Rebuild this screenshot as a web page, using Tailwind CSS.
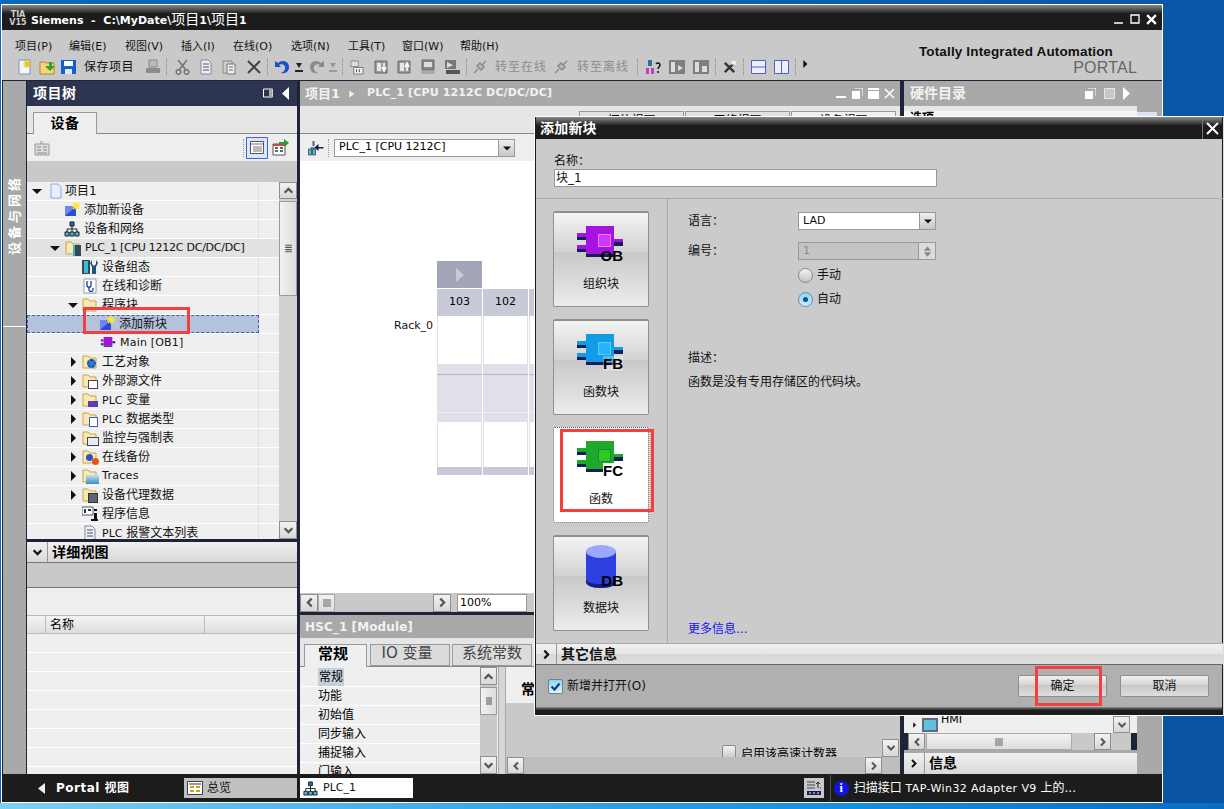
<!DOCTYPE html>
<html lang="zh-CN">
<head>
<meta charset="UTF-8" />
<title>Siemens - C:\MyDate\项目1\项目1</title>
<script src="https://cdn.jsdelivr.net/npm/@tailwindcss/browser@4"></script>
</head>
<body class="relative w-[1224px] h-[809px] overflow-hidden bg-[linear-gradient(100deg,#0a66bc,#0b5fb0_60%,#0a52a2)] font-['DejaVu_Sans','Noto_Sans_CJK_SC',sans-serif] text-[11px] text-black">

<!-- shared icons -->
<svg class="hidden" xmlns="http://www.w3.org/2000/svg">
  <symbol id="folder" viewBox="0 0 16 16"><path d="M1 14V2h5l2 2h6v10z" fill="#fbeab0" stroke="#c9a24a"/></symbol>
  <symbol id="newblock" viewBox="0 0 16 16"><path d="M1 4h11v10H1z" fill="#2f49d8"/><path d="M1 4h11L1 14z" fill="#6f86f0"/><path d="M12 0v8M8 4h8M9 1l6 6M15 1L9 7" stroke="#ffe92e" stroke-width="1.3"/></symbol>
  <symbol id="net" viewBox="0 0 16 16"><path d="M6 1h4v4H6z" fill="#2f6f9f" stroke="#123"/><path d="M8 5v3M3 11V8h10v3M8 8v3" stroke="#222" fill="none"/><path d="M1 11h4v4H1zM6 11h4v4H6zM11 11h4v4h-4z" fill="#57b5c9" stroke="#123"/></symbol>
  <symbol id="chev-up" viewBox="0 0 10 10"><path d="M1.500 7L5 3.500 8.500 7" fill="none" stroke="#555" stroke-width="2"/></symbol>
  <symbol id="chev-down" viewBox="0 0 10 10"><path d="M1.500 3L5 6.500 8.500 3" fill="none" stroke="#555" stroke-width="2"/></symbol>
  <symbol id="chev-left" viewBox="0 0 10 10"><path d="M7 1.500L3.500 5 7 8.500" fill="none" stroke="#555" stroke-width="2"/></symbol>
  <symbol id="chev-right" viewBox="0 0 10 10"><path d="M3 1.500L6.500 5 3 8.500" fill="none" stroke="#555" stroke-width="2"/></symbol>
  <symbol id="grip-v" viewBox="0 0 10 10"><path d="M2 2h6M2 4h6M2 6h6M2 8h6" stroke="#555"/></symbol>
  <symbol id="grip-h" viewBox="0 0 10 10"><path d="M2 1v8M4 1v8M6 1v8M8 1v8" stroke="#666"/></symbol>
  <symbol id="tri-d" viewBox="0 0 10 10"><path d="M0 3h10L5 8z" fill="#111"/></symbol>
  <symbol id="tri-r" viewBox="0 0 10 10"><path d="M3 0l5 5-5 5z" fill="#111"/></symbol>
  <symbol id="doc" viewBox="0 0 16 16"><path d="M3 1h7l3 3v11H3z" fill="#eef" stroke="#889"/><path d="M5 5h6M5 8h6M5 11h6" stroke="#555"/></symbol>
  <symbol id="gray-box" viewBox="0 0 16 16"><path d="M2 2h12v12H2z" fill="#9a9a9a" stroke="#666"/><path d="M4 4h4v8H4z" fill="#e6e6e6"/></symbol>
  <symbol id="plug" viewBox="0 0 16 16"><path d="M2 14l4-4M10 6l4-4M5 7l4 4 3-3-4-4z" fill="#bbb" stroke="#8a8a8a" stroke-width="1.500"/></symbol>
  <symbol id="blockports" viewBox="0 0 46 38"><path d="M0 7h9v4H0zM0 19h9v4H0zM37 13h9v4h-9z" fill="currentColor"/><path d="M0 11h9v3H0zM0 23h9v3H0zM37 16h9v4h-9z" fill="#12205a"/><path d="M9 0h28v28H9z" fill="currentColor"/><path d="M9 28h28v3H9z" fill="#12205a"/></symbol>
</svg>

<!-- main window -->
<div class="absolute left-[1px] top-[4px] w-[1162px] h-[799px] bg-[#1c1c1c] border border-white flex flex-col">
  <!-- title bar -->
  <div class="h-[25px] flex items-center bg-[linear-gradient(#8a8a8a,#1c1c1c_35%,#1c1c1c)] text-white pt-[3px]">
    <span class="ml-[7px] w-[18px] text-[8px] leading-[8px] font-bold text-[#cfcfcf] text-center">TIA<br />V15</span>
    <span class="ml-[4px] text-[11px] font-bold whitespace-pre">Siemens  -  C:\MyDate\<span class="text-[14px] font-normal">项目</span>1\<span class="text-[14px] font-normal">项目</span>1</span>
    <span class="ml-auto mr-[5px] flex items-center gap-[6px]">
      <svg class="w-[10px] h-[10px]" viewBox="0 0 10 10"><path d="M0 9h9" stroke="#fff" stroke-width="1.500"/></svg>
      <svg class="w-[10px] h-[10px]" viewBox="0 0 10 10"><path d="M1 1h8v8H1z" fill="none" stroke="#fff" stroke-width="1.300"/></svg>
      <svg class="w-[11px] h-[11px]" viewBox="0 0 10 10"><path d="M1 1l8 8M9 1L1 9" stroke="#fff" stroke-width="2"/></svg>
    </span>
  </div>

  <!-- menu + toolbar -->
  <div class="relative h-[51px] bg-[#c9c9c9] border-b border-[#1e2438]">
    <div class="flex items-center h-[28px] pt-[6px] pl-[13px] text-[11px] text-[#111]">
      <span class="w-[54px]">项目(P)</span><span class="w-[56px]">编辑(E)</span><span class="w-[56px]">视图(V)</span><span class="w-[52px]">插入(I)</span><span class="w-[58px]">在线(O)</span><span class="w-[57px]">选项(N)</span><span class="w-[54px]">工具(T)</span><span class="w-[58px]">窗口(W)</span><span>帮助(H)</span>
    </div>
    <div class="flex items-center h-[18px] pl-[15px]">
      <svg class="w-[16px] h-[16px]" viewBox="0 0 16 16"><path d="M2 1h11v14H2z" fill="#f4f6ff" stroke="#7d8fc4"/><path d="M10 1v8M6 5h8M7 2l6 6M13 2L7 8" stroke="#e8c800" stroke-width="1.200"/></svg>
      <svg class="w-[17px] h-[16px] ml-[6px]" viewBox="0 0 17 16"><path d="M1 15V3h5l1 1h8v11z" fill="#f7d775" stroke="#a8863a"/><path d="M6 7h4V3h3v4h3l-5 5z" fill="#35a02f"/></svg>
      <svg class="w-[15px] h-[16px] ml-[5px]" viewBox="0 0 15 16"><path d="M0 1h15v14H0z" fill="#1160d0"/><path d="M3 2h9v5H3z" fill="#fff"/><path d="M4 10h7v5H4z" fill="#dfe9ff"/></svg>
      <span class="ml-[8px] w-[53px] text-[12px] tracking-[0.5px] text-[#111]">保存项目</span>
      <svg class="w-[16px] h-[16px] ml-[8px]" viewBox="0 0 16 16"><path d="M4 1h8v7H4z" fill="#bbb" stroke="#888"/><path d="M1 9h14v5H1z" fill="#8c8c8c"/></svg>
      <span class="w-px h-[16px] ml-[5px] border-l border-dotted border-[#888]"></span>
      <svg class="w-[15px] h-[16px] ml-[8px]" viewBox="0 0 15 16"><path d="M3 1l8 10M12 1L4 11" stroke="#777" stroke-width="1.600"/><circle cx="3.500" cy="13" r="2.300" fill="none" stroke="#777" stroke-width="1.500"/><circle cx="11.500" cy="13" r="2.300" fill="none" stroke="#777" stroke-width="1.500"/></svg>
      <svg class="w-[16px] h-[16px] ml-[8px]" viewBox="0 0 16 16"><use href="#doc" /></svg>
      <svg class="w-[16px] h-[16px] ml-[7px]" viewBox="0 0 16 16"><path d="M2 2h9v12H2z" fill="#ccc" stroke="#888"/><path d="M6 5h8v10H6z" fill="#eee" stroke="#777"/><path d="M8 8h4M8 11h4" stroke="#666"/></svg>
      <svg class="w-[14px] h-[14px] ml-[10px]" viewBox="0 0 14 14"><path d="M1 1l12 12M13 1L1 13" stroke="#444" stroke-width="2"/></svg>
      <span class="w-px h-[16px] ml-[6px] border-l border-dotted border-[#888]"></span>
      <svg class="w-[16px] h-[16px] ml-[6px]" viewBox="0 0 16 16"><path d="M1 2v6h6L5 6c3-2 7 0 6 4-.5 2-2 3-4 4 5 1 8-2 8-6 0-6-7-8-11-4z" fill="#1a50c8"/></svg>
      <svg class="w-[8px] h-[10px] ml-[5px]" viewBox="0 0 8 10"><path d="M1 1h6L4 6zM0 8h8v2H0z" fill="#222"/></svg>
      <svg class="w-[16px] h-[16px] ml-[6px]" viewBox="0 0 16 16"><path d="M15 2v6H9l2-2C8 4 4 6 5 10c.5 2 2 3 4 4-5 1-8-2-8-6 0-6 7-8 11-4z" fill="#8c8c8c"/></svg>
      <svg class="w-[8px] h-[10px] ml-[4px]" viewBox="0 0 8 10"><path d="M1 1h6L4 6zM0 8h8v2H0z" fill="#999"/></svg>
      <span class="w-px h-[16px] ml-[5px] border-l border-dotted border-[#888]"></span>
      <svg class="w-[15px] h-[15px] ml-[6px]" viewBox="0 0 16 16"><path d="M2 1h8v6H2z" fill="#ddd" stroke="#888"/><path d="M5 8h10v7H5z" fill="#eee" stroke="#777"/><path d="M8 10v3M11 10v3" stroke="#444"/></svg>
      <svg class="w-[16px] h-[16px] ml-[9px]" viewBox="0 0 16 16"><use href="#gray-box" /><path d="M11 4v7M9 8l2 4 2-4" stroke="#fff" fill="none" stroke-width="1.500"/></svg>
      <svg class="w-[16px] h-[16px] ml-[7px]" viewBox="0 0 16 16"><use href="#gray-box" /><path d="M11 12V5M9 8l2-4 2 4" stroke="#fff" fill="none" stroke-width="1.500"/></svg>
      <svg class="w-[16px] h-[16px] ml-[8px]" viewBox="0 0 16 16"><path d="M2 1h12v10H2z" fill="#888" stroke="#666"/><path d="M4 3h8v5H4z" fill="#ddd"/><path d="M1 12h14v3H1z" fill="#aaa"/></svg>
      <svg class="w-[16px] h-[16px] ml-[8px]" viewBox="0 0 16 16"><path d="M1 1h11v9H1z" fill="#777"/><path d="M3 3l6 3-6 3z" fill="#ddd"/><path d="M2 11h14v4H2z" fill="#555"/></svg>
      <span class="w-px h-[16px] ml-[6px] border-l border-dotted border-[#888]"></span>
      <svg class="w-[16px] h-[16px] ml-[5px]" viewBox="0 0 16 16"><use href="#plug" /></svg>
      <span class="ml-[7px] w-[52px] text-[12px] text-[#8d8d8d] tracking-[1px] whitespace-nowrap">转至在线</span>
      <svg class="w-[16px] h-[16px] ml-[6px]" viewBox="0 0 16 16"><use href="#plug" /></svg>
      <span class="ml-[8px] w-[53px] text-[12px] text-[#8d8d8d] tracking-[1px] whitespace-nowrap">转至离线</span>
      <span class="w-px h-[16px] ml-[7px] border-l border-dotted border-[#888]"></span>
      <svg class="w-[16px] h-[16px] ml-[7px]" viewBox="0 0 16 16"><path d="M3 1h4v6H3z" fill="#2f6f9f"/><path d="M1 9h3v6H1zM6 9h3v6H6z" fill="#c040c0"/><path d="M11 5c1-2 4-1 4 1s-2 2-2 4M13 12v2" fill="none" stroke="#111" stroke-width="1.500"/></svg>
      <svg class="w-[16px] h-[16px] ml-[8px]" viewBox="0 0 16 16"><path d="M0 1h16v14H0z" fill="#7f7f7f"/><path d="M2 3h4v10H2z" fill="#ddd"/><path d="M9 6l5 3-5 3z" fill="#ddd"/></svg>
      <svg class="w-[16px] h-[16px] ml-[8px]" viewBox="0 0 16 16"><path d="M0 1h16v14H0z" fill="#7f7f7f"/><path d="M2 3h4v10H2z" fill="#ddd"/><path d="M9 7h5v6H9z" fill="#ddd"/></svg>
      <span class="w-px h-[16px] ml-[6px] border-l border-dotted border-[#888]"></span>
      <svg class="w-[15px] h-[15px] ml-[6px]" viewBox="0 0 16 16"><path d="M3 3l10 10M13 3L3 13" stroke="#333" stroke-width="2.500"/><path d="M10 1h5v4h-5z" fill="#eee"/></svg>
      <span class="w-px h-[16px] ml-[6px] border-l border-dotted border-[#888]"></span>
      <svg class="w-[15px] h-[16px] ml-[7px]" viewBox="0 0 15 16"><path d="M.5 1.500h14v13H.5z" fill="#eef" stroke="#4a62c0"/><path d="M0 8h15" stroke="#4a62c0"/></svg>
      <svg class="w-[15px] h-[16px] ml-[8px]" viewBox="0 0 15 16"><path d="M.5 1.500h14v13H.5z" fill="#eef" stroke="#4a62c0"/><path d="M7.500 1v14" stroke="#4a62c0"/></svg>
      <span class="w-px h-[16px] ml-[6px] border-l border-dotted border-[#888]"></span>
      <svg class="w-[8px] h-[8px] ml-[5px] -mt-[6px]" viewBox="0 0 10 10"><use href="#tri-r" /></svg>
    </div>
    <div class="absolute right-[25px] top-[15px] text-right leading-none">
      <div class="mr-[24px] font-['Liberation_Sans',sans-serif] text-[13.500px] font-bold tracking-[0.15px] text-[#111]">Totally Integrated Automation</div>
      <div class="font-['Liberation_Sans',sans-serif] text-[16px] text-[#666] tracking-[0.2px] mt-[1px]">PORTAL</div>
    </div>
  </div>

  <!-- work area -->
  <div class="flex-1 flex min-h-0 bg-[#1e2438]">
    <!-- left strip -->
    <div class="relative w-[23px] ml-px bg-[#a9a9a9] flex justify-center">
      <div class="mt-[94px] [writing-mode:vertical-rl] [text-orientation:sideways] rotate-180 text-white font-bold text-[13px] tracking-[3px] h-[80px] whitespace-nowrap">设备与网络</div>
      <div class="absolute left-0 right-0 top-[245px] h-px bg-white"></div>
    </div>

    <!-- project tree + details -->
    <div class="w-[270px] ml-px flex flex-col">
      <div class="h-[25px] shrink-0 bg-[#2c3450] text-white flex items-center pl-[6px] pr-[5px] border-b border-[#2c3450]">
        <span class="text-[14px] font-bold tracking-[0.5px]">项目树</span>
        <svg class="ml-auto w-[10px] h-[10px]" viewBox="0 0 10 10"><path d="M.5 1h9v8h-9z" fill="#2c3450" stroke="#fff"/><path d="M6 1h3.500v8H6z" fill="#aaa"/></svg>
        <svg class="ml-[9px] mr-[2px] w-[8px] h-[13px]" viewBox="0 0 8 13"><path d="M7 0v13L0 6.500z" fill="#fff"/></svg>
      </div>
      <div class="h-[28px] shrink-0 bg-[#e6e6e6] border-b border-[#888] flex items-end pl-[6px]">
        <div class="w-[64px] h-[22px] -mb-px bg-[#efefef] border border-b-0 border-[#999] text-center text-[14px] font-bold leading-[21px] tracking-[0.5px]">设备</div>
      </div>
      <div class="h-[27px] shrink-0 bg-[#eeeeee] flex items-center pl-[7px]">
        <svg class="w-[16px] h-[16px]" viewBox="0 0 16 16"><path d="M1 4h14v11H1z" fill="#ddd" stroke="#999"/><path d="M3 7h4M9 7h4M3 10h4M9 10h4M3 13h10" stroke="#888"/><path d="M6 1l3 3M9 1L6 4" stroke="#999"/></svg>
        <span class="ml-auto w-px h-[18px] border-l border-dotted border-[#999]"></span>
        <span class="ml-[2px] w-[22px] h-[22px] border border-[#3a68d0] bg-[#dde6f6] flex items-center justify-center">
          <svg class="w-[14px] h-[13px]" viewBox="0 0 14 13"><path d="M.5.500h13v12H.5z" fill="#fff" stroke="#555"/><path d="M1 3h12M3 6h9M3 8h9M3 10h9" stroke="#777"/></svg>
        </span>
        <svg class="ml-[4px] mr-[8px] w-[17px] h-[17px]" viewBox="0 0 17 17"><path d="M1 5h12v11H1z" fill="#fff" stroke="#555"/><path d="M1 6h12" stroke="#c44" stroke-width="2"/><path d="M3 9h3M8 9h3M3 12h3M8 12h3" stroke="#333" stroke-width="1.500"/><path d="M7 3h5V0l5 4-5 4V5H7z" fill="#2d9a36"/></svg>
      </div>
      <div class="h-[21px] shrink-0 bg-[#c9c9c9]"></div>

      <!-- tree -->
      <div class="h-[357px] shrink-0 flex bg-[#efefef] text-[12px] text-[#111] overflow-hidden">
        <div class="w-[252px] flex flex-col">
          <div class="h-[19px] shrink-0 flex border-b border-white"><div class="w-[232px] flex items-center pl-[5px] border-r border-[#ddd]"><svg class="w-[10px] h-[10px]"><use href="#tri-d" /></svg><svg class="ml-[6px] w-[16px] h-[16px]" viewBox="0 0 16 16"><path d="M3 1h7l3 3v11H3z" fill="#e6eeff" stroke="#8fa8d8"/></svg><span class="ml-[1px]">项目1</span></div></div>
          <div class="h-[19px] shrink-0 flex border-b border-white"><div class="w-[232px] flex items-center pl-[37px] border-r border-[#ddd]"><svg class="w-[16px] h-[16px]"><use href="#newblock" /></svg><span class="ml-[4px]">添加新设备</span></div></div>
          <div class="h-[19px] shrink-0 flex border-b border-white"><div class="w-[232px] flex items-center pl-[37px] border-r border-[#ddd]"><svg class="w-[16px] h-[16px]"><use href="#net" /></svg><span class="ml-[4px]">设备和网络</span></div></div>
          <div class="h-[19px] shrink-0 flex border-b border-white bg-[#e2e2e2]"><div class="w-[232px] flex items-center pl-[23px] border-r border-[#ddd] whitespace-nowrap"><svg class="w-[10px] h-[10px]"><use href="#tri-d" /></svg><span class="ml-[5px] relative w-[16px] h-[16px]"><svg class="w-[16px] h-[16px]"><use href="#folder" /></svg><span class="absolute right-0 bottom-0 w-[8px] h-[11px] bg-[#34495e] border-l-2 border-[#39b7c8]"></span></span><span class="ml-[4px] text-[11px] tracking-[-0.25px]">PLC_1 [CPU 1212C DC/DC/DC]</span></div></div>
          <div class="h-[19px] shrink-0 flex border-b border-white"><div class="w-[232px] flex items-center pl-[55px] border-r border-[#ddd]"><svg class="w-[16px] h-[16px]" viewBox="0 0 16 16"><path d="M0 1h8v14H0z" fill="#445"/><path d="M2 2h4v12H2z" fill="#2fc4d8"/><path d="M10 1v4l2 2 2-2V1l2 3-2 4v7h-4V8L8 4z" fill="#23527c"/></svg><span class="ml-[4px]">设备组态</span></div></div>
          <div class="h-[19px] shrink-0 flex border-b border-white"><div class="w-[232px] flex items-center pl-[55px] border-r border-[#ddd]"><svg class="w-[16px] h-[16px]" viewBox="0 0 16 16"><path d="M2 1h12v14H2z" fill="#fff" stroke="#99a"/><path d="M5 3v4c0 3 4 3 4 0V3M7 9v3c0 2 4 2 4 0V10" fill="none" stroke="#1f3a93" stroke-width="1.300"/></svg><span class="ml-[4px]">在线和诊断</span></div></div>
          <div class="h-[19px] shrink-0 flex border-b border-white"><div class="w-[232px] flex items-center pl-[41px] border-r border-[#ddd]"><svg class="w-[10px] h-[10px]"><use href="#tri-d" /></svg><span class="ml-[4px] relative w-[16px] h-[16px]"><svg class="w-[16px] h-[16px]"><use href="#folder" /></svg><span class="absolute left-[3px] bottom-[3px] w-[9px] h-[3px] bg-[#556]"></span></span><span class="ml-[4px]">程序块</span></div></div>
          <div class="h-[19px] shrink-0 flex border-b border-white"><div class="w-[232px] flex items-center pl-[71px] bg-[#b4c2dc] border border-dashed border-[#3a5fc0]"><svg class="w-[16px] h-[16px]"><use href="#newblock" /></svg><span class="ml-[4px]">添加新块</span></div></div>
          <div class="h-[19px] shrink-0 flex border-b border-white"><div class="w-[232px] flex items-center pl-[73px] border-r border-[#ddd]"><svg class="w-[16px] h-[12px] text-[#a414d8]" viewBox="0 0 46 34" preserveAspectRatio="none"><use href="#blockports" /></svg><span class="ml-[4px] text-[11px] tracking-[0.2px]">Main [OB1]</span></div></div>
          <div class="h-[19px] shrink-0 flex border-b border-white"><div class="w-[232px] flex items-center pl-[41px] border-r border-[#ddd]"><svg class="w-[10px] h-[10px]"><use href="#tri-r" /></svg><span class="ml-[4px] relative w-[16px] h-[16px]"><svg class="w-[16px] h-[16px]"><use href="#folder" /></svg><span class="absolute left-[5px] top-[5px] w-[9px] h-[9px] rounded-full bg-[#2b78d8] border-2 border-dotted border-[#154a9a]"></span></span><span class="ml-[4px]">工艺对象</span></div></div>
          <div class="h-[19px] shrink-0 flex border-b border-white"><div class="w-[232px] flex items-center pl-[41px] border-r border-[#ddd]"><svg class="w-[10px] h-[10px]"><use href="#tri-r" /></svg><span class="ml-[4px] relative w-[16px] h-[16px]"><svg class="w-[16px] h-[16px]"><use href="#folder" /></svg><span class="absolute right-0 bottom-0 w-[10px] h-[9px] bg-white border border-[#445]"></span></span><span class="ml-[4px]">外部源文件</span></div></div>
          <div class="h-[19px] shrink-0 flex border-b border-white"><div class="w-[232px] flex items-center pl-[41px] border-r border-[#ddd]"><svg class="w-[10px] h-[10px]"><use href="#tri-r" /></svg><span class="ml-[4px] relative w-[16px] h-[16px]"><svg class="w-[16px] h-[16px]"><use href="#folder" /></svg><span class="absolute right-0 bottom-[1px] w-[10px] h-[6px] bg-[#5a3fb0]"></span></span><span class="ml-[4px] whitespace-nowrap"><span class="text-[11px]">PLC</span> 变量</span></div></div>
          <div class="h-[19px] shrink-0 flex border-b border-white"><div class="w-[232px] flex items-center pl-[41px] border-r border-[#ddd]"><svg class="w-[10px] h-[10px]"><use href="#tri-r" /></svg><span class="ml-[4px] relative w-[16px] h-[16px]"><svg class="w-[16px] h-[16px]"><use href="#folder" /></svg><span class="absolute right-0 bottom-0 w-[9px] h-[10px] bg-white border border-[#3a5fc0]"></span></span><span class="ml-[4px] whitespace-nowrap"><span class="text-[11px]">PLC</span> 数据类型</span></div></div>
          <div class="h-[19px] shrink-0 flex border-b border-white"><div class="w-[232px] flex items-center pl-[41px] border-r border-[#ddd]"><svg class="w-[10px] h-[10px]"><use href="#tri-r" /></svg><span class="ml-[4px] relative w-[16px] h-[16px]"><svg class="w-[16px] h-[16px]"><use href="#folder" /></svg><span class="absolute right-[-1px] bottom-0 w-[12px] h-[9px] bg-[#e8ecf6] border border-[#445]"></span></span><span class="ml-[4px]">监控与强制表</span></div></div>
          <div class="h-[19px] shrink-0 flex border-b border-white"><div class="w-[232px] flex items-center pl-[41px] border-r border-[#ddd]"><svg class="w-[10px] h-[10px]"><use href="#tri-r" /></svg><span class="ml-[4px] relative w-[16px] h-[16px]"><svg class="w-[16px] h-[16px]"><use href="#folder" /></svg><span class="absolute left-[4px] bottom-[4px] w-[7px] h-[7px] rounded-full bg-[#2b52c8]"></span><span class="absolute right-[-1px] bottom-0 w-[7px] h-[7px] rounded-full bg-[#e8541c]"></span></span><span class="ml-[4px]">在线备份</span></div></div>
          <div class="h-[19px] shrink-0 flex border-b border-white"><div class="w-[232px] flex items-center pl-[41px] border-r border-[#ddd]"><svg class="w-[10px] h-[10px]"><use href="#tri-r" /></svg><span class="ml-[4px] relative w-[16px] h-[16px]"><svg class="w-[16px] h-[16px]"><use href="#folder" /></svg><span class="absolute right-[-1px] bottom-0 w-[13px] h-[9px] bg-[linear-gradient(#bfe0f2,#3b8dc0)]"></span></span><span class="ml-[4px] text-[11px] tracking-[0.3px]">Traces</span></div></div>
          <div class="h-[19px] shrink-0 flex border-b border-white"><div class="w-[232px] flex items-center pl-[41px] border-r border-[#ddd]"><svg class="w-[10px] h-[10px]"><use href="#tri-r" /></svg><span class="ml-[4px] relative w-[16px] h-[16px]"><svg class="w-[16px] h-[16px]"><use href="#folder" /></svg><span class="absolute right-0 bottom-0 w-[10px] h-[10px] bg-[#5b6470] border border-[#333]"></span></span><span class="ml-[4px]">设备代理数据</span></div></div>
          <div class="h-[19px] shrink-0 flex border-b border-white"><div class="w-[232px] flex items-center pl-[55px] border-r border-[#ddd]"><svg class="w-[16px] h-[16px]" viewBox="0 0 16 16"><path d="M0 1h11v8H0z" fill="#fff" stroke="#556"/><path d="M2 3h2v4H2zM6 3h3v2H6z" fill="#334"/><path d="M12 3h3v2h-3zM12 7h3v8h-3zM9 13h7v2H9z" fill="#111"/></svg><span class="ml-[4px]">程序信息</span></div></div>
          <div class="h-[19px] shrink-0 flex border-b border-white"><div class="w-[232px] flex items-center pl-[55px] border-r border-[#ddd] whitespace-nowrap"><svg class="w-[16px] h-[16px]"><use href="#doc" /></svg><span class="ml-[4px]"><span class="text-[11px]">PLC</span> 报警文本列表</span></div></div>
        </div>
        <!-- tree scrollbar -->
        <div class="w-[18px] bg-[#d0d0d0] flex flex-col">
          <div class="h-[17px] shrink-0 bg-[linear-gradient(#f2f2f2,#d8d8d8)] border border-[#8f8f8f] flex items-center justify-center"><svg class="w-[11px] h-[11px]"><use href="#chev-up" /></svg></div>
          <div class="mt-[2px] h-[95px] shrink-0 bg-[linear-gradient(90deg,#f2f2f2,#dcdcdc)] border border-[#9a9a9a] flex items-center justify-center"><svg class="w-[11px] h-[11px]"><use href="#grip-v" /></svg></div>
          <div class="mt-auto h-[18px] shrink-0 bg-[linear-gradient(#f2f2f2,#d8d8d8)] border border-[#8f8f8f] flex items-center justify-center"><svg class="w-[11px] h-[11px]"><use href="#chev-down" /></svg></div>
        </div>
      </div>

      <!-- details view -->
      <div class="mt-[3px] h-[21px] shrink-0 bg-[linear-gradient(#f0f0f0,#d8d8d8)] border-b border-[#777] flex items-center">
        <span class="w-[21px] h-full flex items-center justify-center border-r border-[#999]"><svg class="w-[11px] h-[11px]" viewBox="0 0 10 10"><path d="M1.500 3L5 6.500 8.500 3" fill="none" stroke="#111" stroke-width="2"/></svg></span>
        <span class="ml-[4px] text-[14px] font-bold tracking-[0.2px]">详细视图</span>
      </div>
      <div class="h-[25px] shrink-0 bg-[#c9c9c9] border-b border-[#777]"></div>
      <div class="flex-1 bg-[#efefef] flex flex-col min-h-0 overflow-hidden">
        <div class="h-[27px] shrink-0"></div>
        <div class="h-[19px] shrink-0 flex bg-[linear-gradient(#f4f4f4,#dedede)] border-y border-[#bbb] text-[12px]">
          <span class="w-[19px] border-r border-[#bbb]"></span>
          <span class="w-[159px] pl-[4px] border-r border-[#bbb]">名称</span>
        </div>
        <div class="h-[19px] shrink-0 border-b border-white"></div>
        <div class="h-[19px] shrink-0 border-b border-white"></div>
        <div class="h-[19px] shrink-0 border-b border-white"></div>
        <div class="h-[19px] shrink-0 border-b border-white"></div>
        <div class="h-[19px] shrink-0 border-b border-white"></div>
        <div class="h-[19px] shrink-0 border-b border-white"></div>
        <div class="h-[19px] shrink-0 border-b border-white"></div>
      </div>
    </div>

    <!-- center -->
    <div class="w-[600px] ml-[3px] flex flex-col">
      <div class="h-[25px] shrink-0 bg-[#a9a9a9] text-[#f2f2f2] flex items-center pl-[5px] font-bold text-[11px] whitespace-nowrap">
        <span class="text-[13px] w-[37px]">项目1</span>
        <svg class="ml-[6px] mr-[12px] w-[7px] h-[8px]" viewBox="0 0 10 10"><path d="M2 0l7 5-7 5z" fill="#f2f2f2"/></svg>
        <span class="tracking-[0.15px]">PLC_1 [CPU 1212C DC/DC/DC]</span>
        <span class="ml-auto mr-[5px] flex items-center gap-[5px]">
          <svg class="w-[11px] h-[11px]" viewBox="0 0 11 11"><path d="M0 8h10v2H0z" fill="#fff"/></svg>
          <svg class="w-[11px] h-[11px]" viewBox="0 0 11 11"><path d="M0 3h8v8H0z" fill="#fff"/><path d="M3 0h8v8" fill="none" stroke="#fff"/></svg>
          <svg class="w-[11px] h-[11px]" viewBox="0 0 11 11"><path d="M0 0h11v2H0zM0 3h11v8H0z" fill="#fff"/></svg>
          <svg class="w-[11px] h-[11px]" viewBox="0 0 11 11"><path d="M1 1l9 9M10 1l-9 9" stroke="#fff" stroke-width="1.500"/></svg>
        </span>
      </div>
      <div class="h-[28px] shrink-0 bg-[#e6e6e6] border-b border-[#888] flex items-end justify-end pr-[4px] gap-px">
        <div class="w-[105px] h-[22px] border border-[#999] bg-[#e0e0e0] text-center text-[12px]">拓扑视图</div>
        <div class="w-[105px] h-[22px] border border-[#999] bg-[#e0e0e0] text-center text-[12px]">网络视图</div>
        <div class="w-[105px] h-[22px] border border-[#999] bg-[#efefef] text-center text-[12px]">设备视图</div>
      </div>
      <div class="h-[27px] shrink-0 bg-[#eeeeee] flex items-center pl-[7px]">
        <svg class="w-[17px] h-[16px]" viewBox="0 0 16 16"><path d="M5 1h2v5H5z" fill="#2f6f9f"/><path d="M1 9h3v6H1zM5 9h3v6H5z" fill="#57b5c9" stroke="#123" stroke-width=".6"/><path d="M3 8h5" stroke="#123"/><path d="M16 7H11V4L7 7.500 11 11V8.500h5z" fill="#14204f"/></svg>
        <span class="ml-[4px] w-px h-[18px] border-l border-dotted border-[#999]"></span>
        <div class="ml-[5px] w-[181px] h-[18px] bg-white border border-[#999] flex items-center text-[11px] pl-[4px]">PLC_1 [CPU 1212C]
          <span class="ml-auto w-[16px] h-full bg-[linear-gradient(#eee,#c8c8c8)] border-l border-[#999] flex items-center justify-center"><svg class="w-[8px] h-[8px]"><use href="#tri-d" /></svg></span>
        </div>
      </div>
      <!-- canvas -->
      <div class="relative h-[432px] shrink-0 bg-white overflow-hidden">
        <span class="absolute left-[94px] top-[157px] text-[11px] text-[#111]">Rack_0</span>
        <div class="absolute left-[137px] top-[100px] w-[140px] grid grid-cols-[45px_45px_45px] gap-x-px">
          <div class="h-[27px] bg-[#a2a6b8] flex items-center justify-center"><svg class="w-[9px] h-[14px]" viewBox="0 0 9 14"><path d="M1 0l8 7-8 7z" fill="#c9cbd8"/></svg></div>
          <div></div><div></div>
          <div class="mt-px h-[27px] bg-[#c8cad8] flex items-center justify-center text-[11px]">103</div>
          <div class="mt-px h-[27px] bg-[#c8cad8] flex items-center justify-center text-[11px]">102</div>
          <div class="mt-px h-[27px] bg-[#c8cad8]"></div>
          <div class="h-[48px] bg-white border-x border-[#dfe0e8]"></div><div class="h-[48px] bg-white border-x border-[#dfe0e8]"></div><div class="h-[48px] bg-white border-x border-[#dfe0e8]"></div>
          <div class="h-[11px] bg-[#dfe0e8] border-b border-[#b5b5c5]"></div><div class="h-[11px] bg-[#dfe0e8] border-b border-[#b5b5c5]"></div><div class="h-[11px] bg-[#dfe0e8] border-b border-[#b5b5c5]"></div>
          <div class="h-[38px] bg-[#dfe0e8] border-b border-[#eeeef4]"></div><div class="h-[38px] bg-[#dfe0e8] border-b border-[#eeeef4]"></div><div class="h-[38px] bg-[#dfe0e8] border-b border-[#eeeef4]"></div>
          <div class="h-[9px] bg-[#dfe0e8]"></div><div class="h-[9px] bg-[#dfe0e8]"></div><div class="h-[9px] bg-[#dfe0e8]"></div>
          <div class="h-[45px] bg-white border-x border-[#dfe0e8]"></div><div class="h-[45px] bg-white border-x border-[#dfe0e8]"></div><div class="h-[45px] bg-white border-x border-[#dfe0e8]"></div>
          <div class="h-[8px] bg-[#c8cad8]"></div><div class="h-[8px] bg-[#c8cad8]"></div><div class="h-[8px] bg-[#c8cad8]"></div>
        </div>
      </div>
      <!-- canvas scrollbar -->
      <div class="h-[19px] shrink-0 bg-[#c9c9c9] flex items-center">
        <span class="w-[18px] h-[18px] bg-[linear-gradient(#f2f2f2,#d8d8d8)] border border-[#8f8f8f] flex items-center justify-center"><svg class="w-[11px] h-[11px]"><use href="#chev-left" /></svg></span>
        <span class="w-[17px] h-[18px] bg-[linear-gradient(#f2f2f2,#dcdcdc)] border border-[#aaa] flex items-center justify-center"><svg class="w-[10px] h-[10px]"><use href="#grip-h" /></svg></span>
        <span class="ml-[98px] w-[18px] h-[18px] bg-[linear-gradient(#f2f2f2,#d8d8d8)] border border-[#8f8f8f] flex items-center justify-center"><svg class="w-[11px] h-[11px]"><use href="#chev-right" /></svg></span>
        <span class="ml-[6px] w-[70px] h-[18px] bg-white border border-[#999] text-[11px] leading-[16px] pl-[2px]">100%</span>
      </div>
      <!-- inspector -->
      <div class="mt-[3px] h-[23px] shrink-0 bg-[#a9a9a9] text-[#f2f2f2] font-bold text-[12px] flex items-center pl-[5px] tracking-[0.1px]">HSC_1 [Module]</div>
      <div class="h-[29px] shrink-0 bg-[#e6e6e6] border-b border-[#888] flex items-end pl-[4px]">
        <div class="w-[63px] h-[23px] -mb-px bg-[#efefef] border border-b-0 border-[#999] pr-[5px] text-center text-[15px] font-bold leading-[18px]">常规</div>
        <div class="ml-[3px] w-[80px] h-[22px] bg-[#dcdcdc] border border-[#999] pr-[6px] text-center text-[15px] text-[#444] leading-[17px]">IO 变量</div>
        <div class="ml-[2px] w-[80px] h-[22px] bg-[#dcdcdc] border border-[#999] text-center text-[15px] text-[#444] leading-[17px] whitespace-nowrap">系统常数</div>
      </div>
      <div class="flex-1 min-h-0 flex bg-[#efefef] overflow-hidden text-[12px]">
        <div class="w-[180px] pt-[1px] pl-[18px] flex flex-col">
          <div class="h-[19px] shrink-0 border-b border-white -ml-[18px] pl-[18px]"><span class="inline-block bg-[#c5cfdc] px-px leading-[18px]">常规</span></div>
          <div class="h-[19px] shrink-0 border-b border-white -ml-[18px] pl-[18px] leading-[18px]">功能</div>
          <div class="h-[19px] shrink-0 border-b border-white -ml-[18px] pl-[18px] leading-[18px]">初始值</div>
          <div class="h-[19px] shrink-0 border-b border-white -ml-[18px] pl-[18px] leading-[18px]">同步输入</div>
          <div class="h-[19px] shrink-0 border-b border-white -ml-[18px] pl-[18px] leading-[18px]">捕捉输入</div>
          <div class="h-[19px] shrink-0 -ml-[18px] pl-[18px] leading-[18px]">门输入</div>
        </div>
        <div class="w-[17px] bg-[#c9c9c9] flex flex-col">
          <span class="h-[18px] shrink-0 bg-[linear-gradient(#f2f2f2,#d8d8d8)] border border-[#8f8f8f] flex items-center justify-center"><svg class="w-[11px] h-[11px]"><use href="#chev-up" /></svg></span>
          <span class="mt-[2px] h-[28px] shrink-0 bg-[linear-gradient(90deg,#f2f2f2,#dcdcdc)] border border-[#9a9a9a] flex items-center justify-center"><svg class="w-[10px] h-[10px]"><use href="#grip-v" /></svg></span>
          <span class="mt-auto h-[18px] shrink-0 bg-[linear-gradient(#f2f2f2,#d8d8d8)] border border-[#8f8f8f] flex items-center justify-center"><svg class="w-[11px] h-[11px]"><use href="#chev-down" /></svg></span>
        </div>
        <div class="w-[8px] ml-px bg-[#d6d6d6] border-x border-[#aaa]"></div>
        <div class="flex-1 relative flex flex-col">
          <div class="h-[36px] shrink-0 pl-[15px] pt-[12px] text-[14px] font-bold">常规</div>
          <div class="flex-1 bg-[#c9c9c9] pl-[216px] pt-[42px] flex items-start text-[12px] overflow-hidden">
            <span class="mr-[5px] w-[14px] h-[14px] border border-[#888] rounded-[2px] bg-[linear-gradient(#f2f2f2,#ccc)] shrink-0"></span><span class="whitespace-nowrap">启用该高速计数器</span>
          </div>
          <div class="h-[17px] shrink-0 bg-[#bdbdbd] flex">
            <span class="ml-px w-[17px] bg-[linear-gradient(#f2f2f2,#d8d8d8)] border border-[#8f8f8f] flex items-center justify-center"><svg class="w-[10px] h-[10px]"><use href="#chev-left" /></svg></span>
            <span class="ml-auto mr-[18px] w-[17px] bg-[linear-gradient(#f2f2f2,#d8d8d8)] border border-[#8f8f8f] flex items-center justify-center"><svg class="w-[10px] h-[10px]"><use href="#chev-right" /></svg></span>
          </div>
          <span class="absolute right-px bottom-[17px] w-[17px] h-[18px] bg-[linear-gradient(#f2f2f2,#d8d8d8)] border border-[#8f8f8f] flex items-center justify-center"><svg class="w-[10px] h-[10px]"><use href="#chev-down" /></svg></span>
        </div>
      </div>
    </div>

    <!-- hardware catalog -->
    <div class="w-[233px] ml-[4px] flex flex-col">
      <div class="h-[25px] shrink-0 bg-[#a9a9a9] text-[#f2f2f2] flex items-center pl-[6px]">
        <span class="text-[14px] font-bold">硬件目录</span>
        <svg class="ml-auto w-[11px] h-[11px]" viewBox="0 0 11 11"><path d="M0 3h8v8H0z" fill="#fff"/><path d="M3 0h8v8" fill="none" stroke="#fff"/></svg>
        <svg class="ml-[8px] w-[11px] h-[11px]" viewBox="0 0 11 11"><path d="M.5 .5h10v10H.5z" fill="#c8c8c8" stroke="#e8e8e8"/></svg>
        <svg class="ml-[8px] mr-[7px] w-[7px] h-[13px]" viewBox="0 0 7 13"><path d="M0 0l7 6.500L0 13z" fill="#fff"/></svg>
      </div>
      <div class="h-[5px] shrink-0 bg-[#e6e6e6]"></div>
      <div class="flex-1 min-h-0 bg-[#f4f4f4] pl-[6px] text-[12px] font-bold leading-[14px]">选项</div>
      <div class="h-[17px] shrink-0 bg-[#efefef] relative text-[11px] pl-[9px] flex items-center">
        <svg class="w-[6px] h-[8px]" viewBox="2 0 7 10"><use href="#tri-r" /></svg>
        <span class="ml-[3px] w-[16px] h-[14px] bg-[#5fc2dc] border-2 border-[#668]"></span>
        <span class="ml-[3px] -mt-[8px]">HMI</span>
        <span class="absolute right-[7px] top-0 w-[17px] h-[17px] bg-[linear-gradient(#f2f2f2,#d8d8d8)] border border-[#8f8f8f] flex items-center justify-center"><svg class="w-[10px] h-[10px]"><use href="#chev-down" /></svg></span>
      </div>
      <div class="h-[17px] shrink-0 bg-[#c9c9c9] flex mr-[6px] ml-[4px]">
        <span class="w-[17px] bg-[linear-gradient(#f2f2f2,#d8d8d8)] border border-[#8f8f8f] flex items-center justify-center"><svg class="w-[10px] h-[10px]"><use href="#chev-left" /></svg></span>
        <span class="w-[146px] ml-px bg-[linear-gradient(#f2f2f2,#dcdcdc)] border border-[#aaa] flex items-center justify-center"><svg class="w-[10px] h-[10px]"><use href="#grip-h" /></svg></span>
        <span class="ml-[22px] w-[17px] bg-[linear-gradient(#f2f2f2,#d8d8d8)] border border-[#8f8f8f] flex items-center justify-center"><svg class="w-[10px] h-[10px]"><use href="#chev-right" /></svg></span>
      </div>
      <div class="h-[3px] shrink-0 bg-[#a9a9a9]"></div>
      <div class="h-[21px] shrink-0 bg-[linear-gradient(#f0f0f0,#d8d8d8)] flex items-center">
        <span class="w-[21px] h-full flex items-center justify-center border-r border-[#999]"><svg class="w-[10px] h-[11px]" viewBox="0 0 10 10"><path d="M3 1.500L6.500 5 3 8.500" fill="none" stroke="#111" stroke-width="2"/></svg></span>
        <span class="ml-[4px] text-[14px] font-bold">信息</span>
      </div>
    </div>
    <div class="flex-1 bg-[#a9a9a9] relative"><span class="absolute left-0 top-[31px] w-[20px] h-[6px] bg-[#dde2f0]"></span></div>
  </div>

  <!-- status bar -->
  <div class="h-[28px] shrink-0 bg-[#1c1c1c] flex items-center text-white relative">
    <svg class="ml-[36px] w-[7px] h-[11px]" viewBox="0 0 7 11"><path d="M7 0v11L0 5.500z" fill="#eee"/></svg>
    <span class="ml-[11px] text-[12px] font-bold tracking-[0.5px] w-[100px] whitespace-nowrap">Portal 视图</span>
    <div class="ml-[28px] w-[113px] h-[20px] bg-[#c0c0c0] text-[#111] text-[12px] flex items-center pl-[3px]">
      <svg class="w-[16px] h-[14px]" viewBox="0 0 16 14"><path d="M.5.500h15v13H.5z" fill="#fff" stroke="#345"/><path d="M2 3h12" stroke="#333"/><path d="M3 5h4v2H3zM9 5h4v2H9zM3 9h4v2H3zM9 9h4v2H9z" fill="#d89a1c"/></svg>
      <span class="ml-[4px]">总览</span>
    </div>
    <div class="ml-[3px] w-[113px] h-[20px] bg-white text-[#111] text-[11px] flex items-center pl-[3px]">
      <svg class="w-[15px] h-[15px]"><use href="#net" /></svg>
      <span class="ml-[5px]">PLC_1</span>
    </div>
    <div class="ml-auto flex items-center mr-[86px] whitespace-nowrap">
      <span class="w-[20px] h-[20px] bg-[#c8c8c8] flex items-center justify-center"><svg class="w-[16px] h-[16px]" viewBox="0 0 16 16"><path d="M1 2h8M1 5h8M1 8h8" stroke="#445"/><path d="M12 8V2M10 4l2-2 2 2M14 8h1" stroke="#14204f" fill="none"/><path d="M1 11h14v4H1z" fill="#14204f"/><path d="M3 13h2M7 13h2M11 13h2" stroke="#fff"/></svg></span>
      <span class="ml-[6px] w-px h-[26px] bg-[#555]"></span>
      <span class="ml-[3px] w-[15px] h-[15px] rounded-full bg-[#1414e0] text-white text-[12px] font-bold font-['Liberation_Serif',serif] flex items-center justify-center">i</span>
      <span class="ml-[5px] text-[12px]">扫描接口 <span class="text-[11px] tracking-[0.4px]">TAP-Win32 Adapter V9</span> 上的...</span>
    </div>
  </div>
</div>

<!-- bottom desktop glow -->
<div class="absolute left-0 right-0 bottom-0 h-[6px] bg-[linear-gradient(90deg,#7fd0f0,#38a8e8_40%,#1090e0_70%,#0a6cc0)]"></div>

<!-- dialog -->
<div class="absolute left-[534px] top-[116px] w-[690px] h-[600px] bg-[#cbcbcb] border border-white border-r-[#dcdcdc] flex flex-col text-[12px] text-[#111] shadow-[inset_1px_0_0_#1c1c1c,inset_-1px_0_0_#1c1c1c]">
  <div class="h-[22px] shrink-0 ml-px mr-px bg-[linear-gradient(#8a8a8a,#1c1c1c_40%,#1c1c1c)] flex items-center text-white">
    <span class="ml-[4px] text-[14px] font-bold tracking-[0.2px]">添加新块</span>
    <span class="ml-auto w-[20px] h-full border-l border-[#777] flex items-center justify-center">
      <svg class="w-[13px] h-[13px]" viewBox="0 0 13 13"><path d="M1 1l11 11M12 1L1 12" stroke="#fff" stroke-width="2"/></svg>
    </span>
  </div>
  <div class="h-[60px] shrink-0 pl-[18px] ml-px border-b border-[#aaa]">
    <div class="pt-[14px] h-[30px] leading-[16px] text-[12px]">名称：</div>
    <div class="w-[383px] h-[18px] bg-white border border-[#999] pl-px leading-[16px]">块_1</div>
  </div>
  <div class="h-[444px] shrink-0 flex ml-px">
    <div class="w-[132px] shrink-0 border-r border-[#aaa] pl-[17px] pt-[12px] flex flex-col gap-[12px]">
      <div class="w-[96px] h-[96px] shrink-0 border border-[#8f8f8f] border-t-2 rounded-[2px] bg-[linear-gradient(#f4f4f4,#d2d2d2_42%,#c8c8c8_42%,#ececec)] flex flex-col items-center">
        <span class="relative mt-[13px] w-[46px] h-[38px] ml-[-2px]">
          <svg class="w-[46px] h-[38px] text-[#a414e0]"><use href="#blockports" /></svg>
          <span class="absolute left-[21px] top-[8px] w-[13px] h-[13px] bg-[#d235fb] border border-[#e080ff]"></span>
          <span class="absolute right-0 bottom-[1px] text-[15px] leading-[15px] font-bold font-['Liberation_Sans',sans-serif] text-black">OB</span>
        </span>
        <span class="mt-[11px]">组织块</span>
      </div>
      <div class="w-[96px] h-[96px] shrink-0 border border-[#8f8f8f] border-t-2 rounded-[2px] bg-[linear-gradient(#f4f4f4,#d2d2d2_42%,#c8c8c8_42%,#ececec)] flex flex-col items-center">
        <span class="relative mt-[13px] w-[46px] h-[38px] ml-[-2px]">
          <svg class="w-[46px] h-[38px] text-[#149be8]"><use href="#blockports" /></svg>
          <span class="absolute left-[21px] top-[8px] w-[13px] h-[13px] bg-[#28b4fa] border border-[#60c8ff]"></span>
          <span class="absolute right-0 bottom-[1px] text-[15px] leading-[15px] font-bold font-['Liberation_Sans',sans-serif] text-black bg-white/30">FB</span>
        </span>
        <span class="mt-[11px]">函数块</span>
      </div>
      <div class="w-[96px] h-[96px] shrink-0 border border-dotted border-[#555] rounded-[2px] bg-white flex flex-col items-center">
        <span class="relative mt-[13px] w-[46px] h-[38px] ml-[-2px]">
          <svg class="w-[46px] h-[38px] text-[#1fa82c]"><use href="#blockports" /></svg>
          <span class="absolute left-[21px] top-[8px] w-[13px] h-[13px] bg-[#2acb1e] border border-[#128a40]"></span>
          <span class="absolute right-0 bottom-[1px] text-[15px] leading-[15px] font-bold font-['Liberation_Sans',sans-serif] text-black bg-white">FC</span>
        </span>
        <span class="mt-[11px]">函数</span>
      </div>
      <div class="w-[96px] h-[96px] shrink-0 border border-[#8f8f8f] border-t-2 rounded-[2px] bg-[linear-gradient(#f4f4f4,#d2d2d2_42%,#c8c8c8_42%,#ececec)] flex flex-col items-center">
        <span class="relative mt-[8px] w-[46px] h-[43px] ml-[-2px]">
          <svg class="absolute left-[9px] top-0 w-[30px] h-[43px]" viewBox="0 0 30 43"><path d="M0 6v31c0 3 6 6 15 6s15-3 15-6V6z" fill="#2c3fe0"/><path d="M0 34v3c0 3 6 6 15 6s15-3 15-6v-3c0 3-6 5-15 5S0 37 0 34z" fill="#171f80"/><ellipse cx="15" cy="6.500" rx="15" ry="6.500" fill="#9aa8ff"/></svg>
          <span class="absolute right-0 bottom-0 text-[15px] leading-[15px] font-bold font-['Liberation_Sans',sans-serif] text-black">DB</span>
        </span>
        <span class="mt-[11px]">数据块</span>
      </div>
    </div>
    <div class="flex-1 relative pl-[20px]">
      <div class="flex items-center h-[18px] mt-[13px]"><span class="w-[110px]">语言：</span>
        <span class="w-[138px] h-[18px] bg-white border border-[#999] flex items-center pl-[4px] text-[11px]">LAD<span class="ml-auto w-[16px] h-full bg-[linear-gradient(#eee,#c8c8c8)] border-l border-[#999] flex items-center justify-center"><svg class="w-[8px] h-[8px]"><use href="#tri-d" /></svg></span></span>
      </div>
      <div class="flex items-center h-[18px] mt-[12px]"><span class="w-[110px]">编号：</span>
        <span class="w-[138px] h-[18px] bg-[#c4c4c4] border border-[#999] flex items-center pl-[4px] text-[11px] text-[#888]">1<span class="ml-auto w-[17px] h-full bg-[#dcdcdc] border-l border-[#999] flex flex-col items-center justify-center gap-px"><svg class="w-[9px] h-[6px]" viewBox="0 0 10 6"><path d="M1 6l4-5 4 5z" fill="#888"/></svg><svg class="w-[9px] h-[6px]" viewBox="0 0 10 6"><path d="M1 0l4 5 4-5z" fill="#888"/></svg></span></span>
      </div>
      <div class="flex items-center h-[16px] mt-[7px] ml-[110px]"><span class="w-[15px] h-[15px] rounded-full border border-[#888] bg-[linear-gradient(#f2f2f2,#c4c4c4)]"></span><span class="ml-[4px]">手动</span></div>
      <div class="flex items-center h-[16px] mt-[8px] ml-[110px]"><span class="w-[15px] h-[15px] rounded-full border border-[#6a8ca8] bg-[linear-gradient(#8fd4f0,#cdeeff)] flex items-center justify-center"><span class="w-[5px] h-[5px] rounded-full bg-[#0f4c96]"></span></span><span class="ml-[4px]">自动</span></div>
      <div class="mt-[43px] leading-[16px]">描述：</div>
      <div class="mt-[8px] leading-[16px]">函数是没有专用存储区的代码块。</div>
      <a class="absolute left-[20px] bottom-[6px] text-[#1414f0] leading-[16px]">更多信息...</a>
    </div>
  </div>
  <div class="h-[22px] shrink-0 ml-px flex items-center bg-[linear-gradient(#f0f0f0,#e6e6e6_50%,#d8d8d8_50%,#dcdcdc)] border-y border-[#aaa] border-b-[#666]">
    <span class="w-[21px] h-full flex items-center justify-center border-r border-[#999]"><svg class="w-[11px] h-[11px]" viewBox="0 0 10 10"><path d="M3 1.500L6.500 5 3 8.500" fill="none" stroke="#111" stroke-width="2"/></svg></span>
    <span class="ml-[4px] text-[14px] font-bold">其它信息</span>
  </div>
  <div class="h-[42px] shrink-0 ml-px mr-px bg-[#b0b0b0] flex items-center pl-[12px]">
    <span class="w-[15px] h-[15px] rounded-[2px] border border-[#688] bg-[linear-gradient(#8fd4f0,#dff4ff)] flex items-center justify-center"><svg class="w-[11px] h-[11px]" viewBox="0 0 11 11"><path d="M1.500 5.500l3 3 5-6" fill="none" stroke="#123a8a" stroke-width="2.200"/></svg></span>
    <span class="ml-[4px]">新增并打开(O)</span>
    <span class="ml-auto w-[89px] h-[22px] rounded-[2px] border border-[#8f8f8f] bg-[linear-gradient(#f0f0f0,#d4d4d4_45%,#c8c8c8_45%,#dedede)] text-center leading-[20px]">确定</span>
    <span class="ml-[13px] mr-[13px] w-[89px] h-[22px] rounded-[2px] border border-[#8f8f8f] bg-[linear-gradient(#f0f0f0,#d4d4d4_45%,#c8c8c8_45%,#dedede)] text-center leading-[20px]">取消</span>
  </div>
  <div class="h-[8px] shrink-0 ml-px mr-px bg-[linear-gradient(#909090,#1c1c1c_40%,#1c1c1c)]"></div>
</div>

<!-- red annotation boxes -->
<div class="absolute left-[83px] top-[307px] w-[107px] h-[27px] border-[3px] border-[#f33f3f]"></div>
<div class="absolute left-[560px] top-[429px] w-[94px] h-[83px] border-[3px] border-[#f33f3f]"></div>
<div class="absolute left-[1035px] top-[666px] w-[67px] h-[40px] border-[3px] border-[#f33f3f]"></div>

</body>
</html>
